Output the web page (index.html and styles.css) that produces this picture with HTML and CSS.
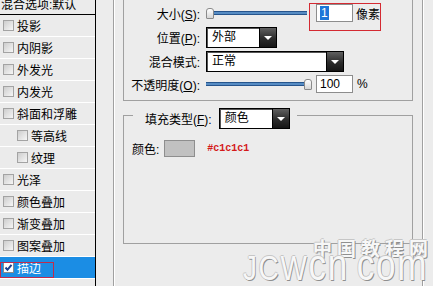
FILE: index.html
```html
<!DOCTYPE html>
<html lang="zh-CN">
<head>
  <meta charset="UTF-8">
  <meta name="viewport" content="width=device-width, initial-scale=1.0">
  <title>图层样式 - 描边</title>
  <link rel="stylesheet" href="styles.css">
</head>
<body>
  <div class="dialog">
    <ul class="style-list">
      <li class="list-title">混合选项:默认</li>
      <li class="style-row"><span class="check"></span>投影</li>
      <li class="style-row"><span class="check"></span>内阴影</li>
      <li class="style-row"><span class="check"></span>外发光</li>
      <li class="style-row"><span class="check"></span>内发光</li>
      <li class="style-row"><span class="check"></span>斜面和浮雕</li>
      <li class="style-row sub"><span class="check"></span>等高线</li>
      <li class="style-row sub"><span class="check"></span>纹理</li>
      <li class="style-row"><span class="check"></span>光泽</li>
      <li class="style-row"><span class="check"></span>颜色叠加</li>
      <li class="style-row"><span class="check"></span>渐变叠加</li>
      <li class="style-row"><span class="check"></span>图案叠加</li>
      <li class="style-row selected">
        <span class="check checked">
          <svg width="9" height="9" viewBox="0 0 9 9"><path d="M1.5 4.5 L3.5 6.8 L7.5 1.8" fill="none" stroke="#1b3f8f" stroke-width="2"/></svg>
        </span>描边
      </li>
    </ul>

    <div class="panel">
      <div class="stroke-group">
        <div class="structure">
          <div class="field-row row-size">
            <label>大小(<u>S</u>):</label>
            <div class="slider size"><span class="thumb"></span></div>
            <div class="size-wrap">
              <span class="num"><span class="sel">1</span></span>
              <span class="unit">像素</span>
            </div>
          </div>
          <div class="field-row tall">
            <label>位置(<u>P</u>):</label>
            <div class="select short"><span class="select-value">外部</span><span class="select-btn"></span></div>
          </div>
          <div class="field-row tall">
            <label>混合模式:</label>
            <div class="select wide"><span class="select-value">正常</span><span class="select-btn"></span></div>
          </div>
          <div class="field-row">
            <label>不透明度(<u>O</u>):</label>
            <div class="slider opacity"><span class="thumb"></span></div>
            <span class="num opacity-num">100</span>
            <span class="unit pct">%</span>
          </div>
        </div>

        <fieldset class="fill">
          <legend>
            <span class="legend-label">填充类型(<u>F</u>):</span>
            <span class="select short"><span class="select-value">颜色</span><span class="select-btn"></span></span>
          </legend>
          <div class="color-row">
            <span>颜色:</span>
            <span class="swatch"></span>
            <span class="hex">#c1c1c1</span>
          </div>
        </fieldset>
      </div>
    </div>

    <div class="watermark">
      <div class="wm-cn">中国教程网</div>
      <div class="wm-en"><span class="wm-caps">JCW</span><span class="wm-low">cn</span><span class="wm-dot"></span><span class="wm-low">com</span></div>
    </div>
  </div>
</body>
</html>
```

FILE: styles.css
```css
* {
  box-sizing: border-box;
}
body {
  margin: 0;
  width: 433px;
  height: 286px;
  overflow: hidden;
  background: #ececec;
  font-family: 'Liberation Sans', 'Noto Sans CJK SC', sans-serif;
  font-size: 12px;
  color: #000;
}
.dialog {
  display: flex;
  height: 286px;
  position: relative;
}

/* left list of styles */
.style-list {
  list-style: none;
  margin: 0;
  padding: 0;
  width: 96px;
  flex: none;
  border-right: 1px solid #000;
  background: #ebebeb;
}
.list-title {
  height: 15px;
  line-height: 10px;
  border-bottom: 1px solid #000;
  white-space: nowrap;
  padding-left: 1px;
}
.style-row {
  height: 22px;
  display: flex;
  align-items: center;
  gap: 3px;
  padding-left: 3px;
  border-bottom: 1px solid #fff;
  white-space: nowrap;
}
.style-row.sub {
  padding-left: 17px;
}
.style-row.selected {
  background: #1b8de4;
  color: #fff;
  position: relative;
}
.style-row.selected::after {
  content: "";
  position: absolute;
  left: 0;
  top: 5px;
  width: 52px;
  height: 14px;
  border: 1px solid #c02c4c;
}
.check {
  width: 11px;
  height: 11px;
  flex: none;
  border: 1px solid #a3a3a3;
  background: linear-gradient(135deg, #cdcdcd, #f6f6f6);
}
.check.checked {
  background: #fff;
  border-color: #8a8a8a;
  display: flex;
  align-items: center;
  justify-content: center;
}

/* right settings panel */
.panel {
  flex: 1;
  padding-left: 17px;
}
.stroke-group {
  width: 310px;
  height: 100%;
  padding: 0 9px;
  border-left: 1px solid #a0a0a0;
  border-right: 1px solid #a0a0a0;
  box-shadow: inset 1px 0 0 #fff, 1px 0 0 #fff;
}
.structure {
  height: 101px;
  padding-top: 4px;
  border: 1px solid #a0a0a0;
  border-top: none;
  display: flex;
  flex-direction: column;
  gap: 3px;
}
.field-row {
  display: flex;
  align-items: center;
  height: 18px;
}
.field-row.tall {
  height: 21px;
}
.row-size {
  margin-bottom: 2px;
}
.field-row label {
  width: 76px;
  margin-right: 6px;
  text-align: right;
  white-space: nowrap;
}

.slider {
  display: flex;
  align-items: center;
  height: 18px;
  background: linear-gradient(#0f3a72, #6ea7de 50%, #0f3a72) center / 100% 4px no-repeat;
}
.slider.size {
  width: 101px;
}
.slider.opacity {
  width: 106px;
  justify-content: flex-end;
}
.thumb {
  width: 8px;
  height: 11px;
  border: 1px solid #8a8a8a;
  border-radius: 3px 3px 1px 1px;
  background: linear-gradient(#fff, #d6d6d6);
}

.num {
  display: block;
  width: 37px;
  height: 18px;
  padding-left: 3px;
  line-height: 16px;
  background: #fff;
  border: 1px solid #8d8d8d;
}
.sel {
  background: #1c76d8;
  color: #fff;
  padding: 0 1px;
}
.size-wrap {
  display: flex;
  align-items: center;
  margin-left: 9px;
  position: relative;
}
.size-wrap::after {
  content: "";
  position: absolute;
  left: -7px;
  top: -1px;
  width: 70px;
  height: 26px;
  border: 1px solid #d42a32;
}
.unit {
  margin-left: 3px;
}
.opacity-num {
  margin-left: 4px;
}
.pct {
  margin-left: 4px;
}

.select {
  display: flex;
  height: 21px;
  background: #fff;
  border: 1px solid #000;
  box-shadow: inset 1px 1px 0 #555;
}
.select.short {
  width: 71px;
}
.select.wide {
  width: 138px;
}
.select-value {
  flex: 1;
  padding-left: 5px;
  line-height: 19px;
}
.select-btn {
  width: 17px;
  display: flex;
  align-items: center;
  justify-content: center;
  border-left: 1px solid #000;
  background: linear-gradient(#606060, #2c2c2c 55%, #161616);
}
.select-btn::after {
  content: "";
  border-left: 4px solid transparent;
  border-right: 4px solid transparent;
  border-top: 4px solid #fff;
}

.fill {
  margin: 0;
  padding: 0 8px;
  height: 143px;
  min-inline-size: 0;
  border: 1px solid #a0a0a0;
}
.fill legend {
  display: flex;
  align-items: center;
  margin-left: 1px;
  padding: 7px 7px 0 12px;
}
.legend-label {
  margin-right: 7px;
  white-space: nowrap;
}
.color-row {
  display: flex;
  align-items: center;
  height: 18px;
  margin-top: 10px;
}
.swatch {
  width: 31px;
  height: 17px;
  margin-left: 5px;
  background: #c1c1c1;
  border: 1px solid #8e8e8e;
}
.hex {
  margin-left: 12px;
  color: #d41a1a;
  font: bold 10px 'Liberation Mono', monospace;
}

/* site watermark over the corner */
.watermark {
  position: absolute;
  left: 236px;
  top: 238px;
  width: 197px;
  color: #f7f7f7;
  text-shadow: 1px 1px 0 #8f8f8f, -1px 0 0 #c6c6c6, 0 -1px 0 #c6c6c6;
  pointer-events: none;
}
.wm-cn {
  font: bold 19px/20px 'Noto Sans CJK SC', sans-serif;
  letter-spacing: 5px;
  text-align: right;
}
.wm-en {
  display: flex;
  align-items: baseline;
  height: 26px;
  margin-left: 7px;
  font-family: 'Liberation Sans', sans-serif;
  line-height: 14px;
  letter-spacing: 2px;
  white-space: nowrap;
  transform: scaleX(0.8);
  transform-origin: left;
}
.wm-caps {
  font-size: 35px;
}
.wm-low {
  font-size: 44px;
}
.wm-dot {
  display: inline-block;
  width: 8px;
  height: 8px;
  margin: 0 6px 0 4px;
  background: #e00;
}
```
